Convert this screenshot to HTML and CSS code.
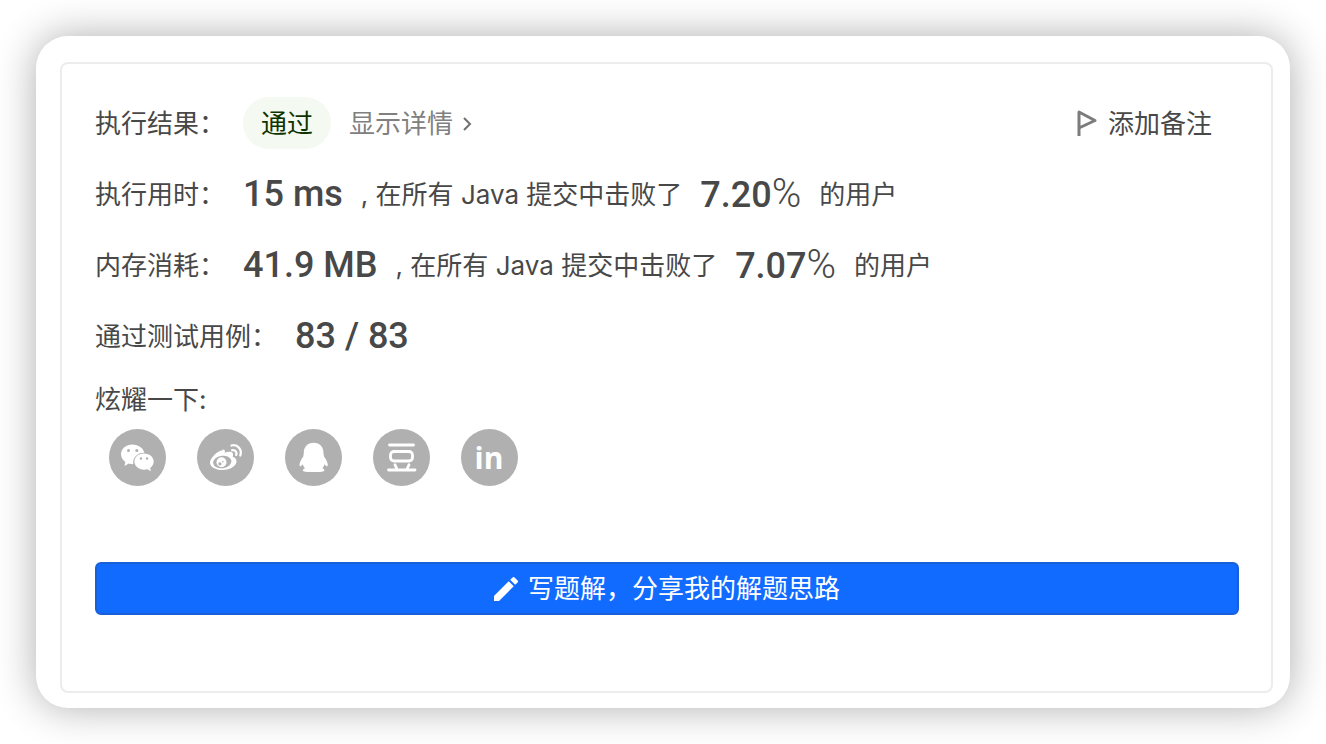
FILE: index.html
```html
<!DOCTYPE html>
<html lang="zh-CN">
<head>
<meta charset="utf-8">
<title>执行结果</title>
<link rel="stylesheet" href="styles.css">
</head>
<body>
<main class="card">
  <section class="result">
    <div class="row">
      <span class="label">执行结果：</span>
      <span class="status">通过</span>
      <a class="details" href="#">显示详情
        <svg class="chevron" viewBox="0 0 10 16" aria-hidden="true"><path d="M2 2l6 6-6 6"/></svg>
      </a>
      <button class="note" type="button">
        <svg class="flag" viewBox="0 0 22 28" aria-hidden="true"><path d="M3 27V3L19 11.500L3 19"/></svg>
        添加备注
      </button>
    </div>
    <div class="row">
      <span class="label">执行用时：</span>
      <strong class="value">15 ms</strong>
      <span class="label">, 在所有 Java 提交中击败了</span>
      <strong class="value">7.20<span class="percent">%</span></strong>
      <span class="label">的用户</span>
    </div>
    <div class="row">
      <span class="label">内存消耗：</span>
      <strong class="value">41.9 MB</strong>
      <span class="label">, 在所有 Java 提交中击败了</span>
      <strong class="value">7.07<span class="percent">%</span></strong>
      <span class="label">的用户</span>
    </div>
    <div class="row">
      <span class="label">通过测试用例：</span>
      <strong class="value">83 / 83</strong>
    </div>
    <div class="share">
      <span class="share-title">炫耀一下:</span>
      <div class="share-list">
        <button class="share-item" type="button" aria-label="微信">
          <svg viewBox="0 0 57 57" aria-hidden="true">
            <path class="fill" d="M23.500 15.500c-6.500 0-11.500 4.300-11.500 9.800 0 3.200 1.600 5.800 4.300 7.600l-.8 4 4.300-2.300c1.500.5 3 .6 4.500.5-1-6.500 4.500-11.500 11-11.300-1-4.700-5.800-8.300-11.800-8.300z"/>
            <path class="fill" d="M35 24.500c-5.300 0-9.600 3.600-9.600 8s4.300 8.200 9.600 8.200c1.300 0 2.500-.2 3.500-.5l3.400 2-.8-3.300c2.200-1.500 3.600-3.800 3.600-6.400 0-4.400-4.400-8-9.700-8z"/>
            <g class="hole"><circle cx="19.500" cy="21.500" r="1.500"/><circle cx="27.800" cy="21.500" r="1.500"/><circle cx="32" cy="29.500" r="1.200"/><circle cx="38" cy="29.500" r="1.200"/></g>
          </svg>
        </button>
        <button class="share-item" type="button" aria-label="微博">
          <svg viewBox="0 0 57 57" aria-hidden="true">
            <path class="fill" d="M25.500 21.500c-4-.5-12.500 7-12.500 12.200 0 4.300 5.800 7.300 12.200 7.300 8.300 0 14.300-4.300 14.300-8.800 0-2.500-2-3.800-3.800-4.400.8-2 .5-4-1.200-4.800-1.800-.8-4.500-.2-6.800.8.800-2.800-.4-3.500-2.200-3.300z"/>
            <ellipse class="hole" cx="25.300" cy="33" rx="9.200" ry="6.200" transform="rotate(-8 25.300 33)"/>
            <circle class="fill" cx="24.500" cy="33.300" r="5"/>
            <circle class="hole" cx="22.900" cy="34.800" r="1.600"/><circle class="hole" cx="25.900" cy="32.800" r=".8"/>
            <path class="line" stroke-width="2.300" d="M34.500 16.500c6-1.500 11 4 8.800 10M35.200 21.200c3-.6 5 2 4 4.700"/>
          </svg>
        </button>
        <button class="share-item" type="button" aria-label="QQ">
          <svg viewBox="0 0 57 57" aria-hidden="true">
            <path class="fill" d="M28.700 13.800c-6.500 0-10 4.600-9.900 10.400l-.5 3.300c-2.200 3-3.900 6.200-3.800 8.800.1 1.500 1.200 1.600 3.200-1 .5 1.700 1.300 3 2.300 4-3.500 1.600-2.600 3.700 2.200 3.700h12.900c4.800 0 5.700-2.100 2.200-3.700 1-1 1.800-2.300 2.300-4 2 2.600 3.100 2.500 3.200 1 .1-2.600-1.600-5.800-3.800-8.800l-.5-3.300c.1-5.800-3.400-10.400-9.800-10.400z"/>
          </svg>
        </button>
        <button class="share-item" type="button" aria-label="豆瓣">
          <svg viewBox="0 0 57 57" aria-hidden="true">
            <g class="line" stroke-width="2.800"><path d="M16.500 16h24M15.500 41h26.500M22 35.800l2 4.200M36 35.800l-2 4.200"/><rect x="17.500" y="22.500" width="22" height="9.500" rx="3.500"/></g>
          </svg>
        </button>
        <button class="share-item" type="button" aria-label="LinkedIn">
          <svg viewBox="0 0 57 57" aria-hidden="true"><text class="logo-text" x="28" y="40" text-anchor="middle">in</text></svg>
        </button>
      </div>
    </div>
    <button class="write" type="button">
      <svg class="pencil" viewBox="3 3 18 18" aria-hidden="true"><path d="M3 17.250V21h3.750L17.810 9.940l-3.750-3.750L3 17.250zM20.710 7.040a1 1 0 0 0 0-1.410l-2.340-2.340a1 1 0 0 0-1.410 0l-1.830 1.830 3.750 3.750 1.830-1.830z"/></svg>
      写题解，分享我的解题思路
    </button>
  </section>
</main>
</body>
</html>
```
FILE: styles.css
```css
* {
  box-sizing: border-box;
}

body {
  margin: 0;
  padding: 36px;
  background: #fff;
  color: #484848;
  font: 26px/38px Inter, "Noto Sans CJK SC", sans-serif;
}

button {
  border: 0;
  padding: 0;
  background: none;
  color: inherit;
  font: inherit;
  cursor: pointer;
}

.card {
  padding: 26px 17px 15px 24px;
  border-radius: 32px;
  background: #fff;
  box-shadow: 0 0 40px rgba(0, 0, 0, 0.32);
}

.result {
  display: flex;
  flex-direction: column;
  gap: 19px;
  padding: 33px 32px 76px 33px;
  border: 2px solid #ececec;
  border-radius: 8px;
}

.row {
  display: flex;
  align-items: center;
  gap: 18px;
  height: 52px;
  white-space: nowrap;
}

.label {
  padding-top: 2px;
}

.status {
  padding: 8px 18px 6px;
  border-radius: 26px;
  background: #f4faf1;
  color: #0f3300;
}

.details {
  display: flex;
  align-items: center;
  gap: 9px;
  padding-top: 2px;
  color: #808080;
  text-decoration: none;
}

.chevron {
  width: 10px;
  height: 16px;
  fill: none;
  stroke: #707070;
  stroke-width: 2;
}

.note {
  display: flex;
  align-items: center;
  gap: 10px;
  margin-left: auto;
  padding-top: 2px;
  padding-right: 27px;
}

.flag {
  width: 22px;
  height: 28px;
  margin-bottom: 3px;
  fill: none;
  stroke: #7c7c7c;
  stroke-width: 3;
  stroke-linejoin: round;
}

.value {
  font: 500 36px/52px Roboto, sans-serif;
}

.percent {
  font-size: 40px;
  font-weight: 300;
}

.share {
  display: flex;
  flex-direction: column;
  gap: 10px;
}

.share-list {
  display: flex;
  gap: 31px;
  padding-left: 14px;
}

.share-item {
  width: 57px;
  height: 57px;
  border-radius: 50%;
  background: #b0b0b0;
}

.share-item svg {
  display: block;
}

.fill {
  fill: #fff;
}

.hole {
  fill: #b0b0b0;
}

.line {
  fill: none;
  stroke: #fff;
  stroke-linecap: round;
}

.logo-text {
  fill: #fff;
  font: 700 30px "Open Sans", sans-serif;
}

.write {
  display: flex;
  align-items: center;
  justify-content: center;
  gap: 10px;
  margin-top: 57px;
  padding: 6px 6px 5px;
  border: 2px solid #1860d8;
  border-radius: 6px;
  background: #126bff;
  color: #fff;
}

.pencil {
  width: 24px;
  height: 24px;
  fill: #fff;
}
```
